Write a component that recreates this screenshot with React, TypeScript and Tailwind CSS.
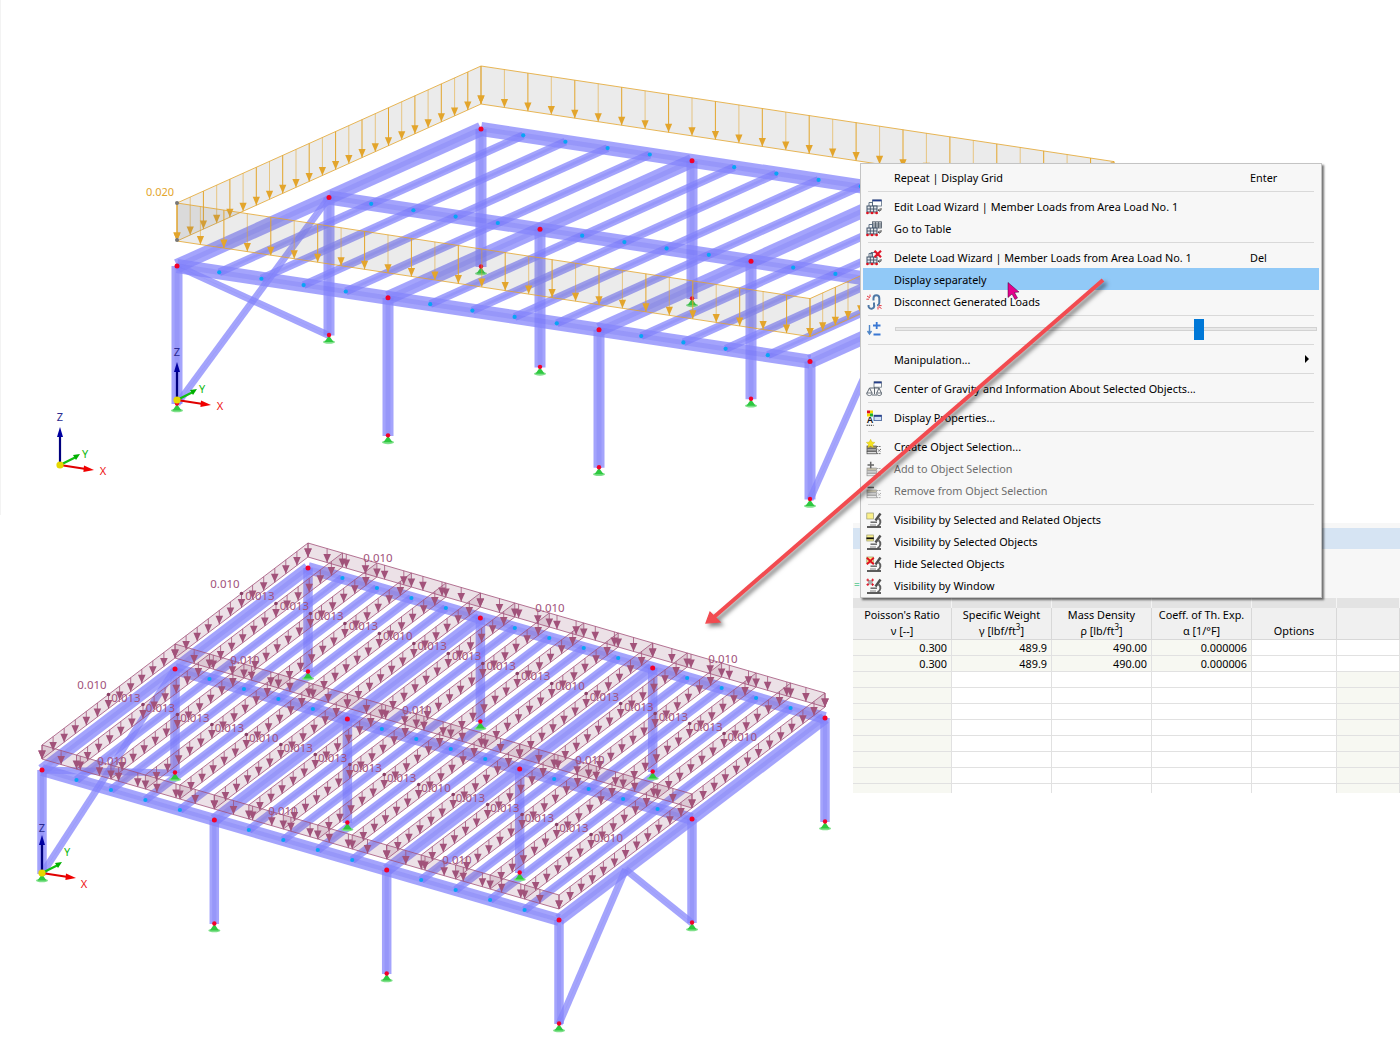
import React from "react";

type Pt = [number, number];
const BEAM = "#8484fb";
const BEAM_C = "#6a6af0";

type Proj = (i: number, j: number, h?: number) => Pt;
const top: Proj = (i, j, h = 0) => [177 + i * 42.2 + j * 152, 266 + i * 6.37 - j * 68.5 + h];
const bot: Proj = (i, j, h = 0) => [42 + i * 34.47 + j * 133, 770 + i * 10 - j * 101 + h];

const line = (a: Pt, b: Pt) => `M${a[0].toFixed(1)} ${a[1].toFixed(1)}L${b[0].toFixed(1)} ${b[1].toFixed(1)}`;
const range = (n: number) => Array.from({ length: n }, (_, k) => k);

function Member({ a, b, w, c }: { a: Pt; b: Pt; w: number; c: number }) {
  return (
    <g>
      <path d={line(a, b)} stroke={BEAM} strokeOpacity={0.74} strokeWidth={w} fill="none" />
      <path d={line(a, b)} stroke={BEAM_C} strokeOpacity={0.22} strokeWidth={c} fill="none" />
    </g>
  );
}

function Frame({ p, colH, beamW, joistW, colW }: { p: Proj; colH: number; beamW: number; joistW: number; colW: number }) {
  const grid = [0, 5, 10, 15];
  return (
    <g>
      {grid.flatMap((i) => [0, 1, 2].map((j) => <Member key={`c${i}${j}`} a={p(i, j)} b={p(i, j, colH)} w={colW} c={colW * 0.45} />))}
      {range(16).map((i) => (
        <Member key={`j${i}`} a={p(i, 0)} b={p(i, 2)} w={i % 5 === 0 ? beamW : joistW} c={i % 5 === 0 ? beamW * 0.35 : joistW * 0.35} />
      ))}
      {[0, 1, 2].map((j) => <Member key={`b${j}`} a={p(0, j)} b={p(15, j)} w={beamW} c={beamW * 0.35} />)}
      <Member a={p(0, 0, colH)} b={p(0, 1)} w={7} c={0.5} />
      <Member a={p(0, 0)} b={p(0, 1, colH)} w={7} c={0.5} />
      <Member a={p(15, 0, colH)} b={p(15, 0.5)} w={7} c={0.5} />
      <Member a={p(15, 0.5)} b={p(15, 1, colH)} w={7} c={0.5} />
      {[0, 1, 2].flatMap((j) =>
        range(16).map((i) =>
          i % 5 === 0 ? null : <circle key={`n${i}${j}`} cx={p(i, j)[0]} cy={p(i, j)[1]} r={2.1} fill="#08a4f5" />
        )
      )}
      {grid.flatMap((i) =>
        [0, 1, 2].map((j) => {
          const t = p(i, j);
          const f = p(i, j, colH);
          return (
            <g key={`s${i}${j}`}>
              <circle cx={t[0]} cy={t[1]} r={2.5} fill="#f2002a" />
              <ellipse cx={f[0]} cy={f[1] + 6.5} rx={6} ry={1.8} fill="#7fe08a" />
              <path d={`M${f[0]} ${f[1]}l-4.5 6.5h9z`} fill="#2ec840" />
              <circle cx={f[0]} cy={f[1] - 0.5} r={2.2} fill="#f2002a" />
            </g>
          );
        })
      )}
    </g>
  );
}

function Strip({ a, b, n, tH, bH, head, fill, stroke, w, lineW, fade }: { a: (h: number) => Pt; b: (h: number) => Pt; n: number; tH: number; bH: number; head: number; fill: string; stroke: string; w: number; lineW: number; fade?: boolean }) {
  const at = (k: number, h: number): Pt => {
    const s = a(h);
    const e = b(h);
    return [s[0] + ((e[0] - s[0]) * k) / n, s[1] + ((e[1] - s[1]) * k) / n];
  };
  return (
    <g>
      <path d={`${line(a(tH), b(tH))}L${b(bH).join(" ")}L${a(bH).join(" ")}Z`} fill={fill} />
      <path d={line(a(tH), b(tH))} stroke={stroke} strokeWidth={0.8} />
      <path d={line(a(bH), b(bH))} stroke={stroke} strokeWidth={0.8} />
      {range(n + 1).map((k) => {
        const s = at(k, tH);
        const e = at(k, bH);
        return (
          <g key={k}>
            <path d={line(s, e)} stroke={stroke} strokeWidth={lineW} strokeOpacity={fade && k % 2 === 1 ? 0.55 : 1} />
            <path d={`M${e[0]} ${e[1]}l${-w} ${-head}h${w * 2}z`} fill={stroke} />
          </g>
        );
      })}
    </g>
  );
}

function TopLoads() {
  const s = { tH: -63, bH: -25, head: 8.5, fill: "rgba(120,120,120,0.15)", stroke: "#e3a52c", w: 3.6, lineW: 1, fade: true };
  return (
    <g>
      <Strip a={(h) => top(0, 2, h)} b={(h) => top(15, 2, h)} n={27} {...s} />
      <Strip a={(h) => top(15, 0, h)} b={(h) => top(15, 2, h)} n={24} {...s} />
      <Strip a={(h) => top(0, 0, h)} b={(h) => top(0, 2, h)} n={23} {...s} />
      <Strip a={(h) => top(0, 0, h)} b={(h) => top(15, 0, h)} n={27} {...s} />
      <circle cx={177} cy={203} r={2} fill="#777" />
      <circle cx={177} cy={240} r={2} fill="#777" />
    </g>
  );
}

function BotLoads() {
  const s = { tH: -25, bH: -11, head: 8.5, fill: "rgba(150,90,120,0.18)", stroke: "#a2527a", w: 3.8, lineW: 0.8 };
  const rows: { x: number; y: number; t: string }[] = [];
  range(15).forEach((k) => {
    const t = k % 5 === 4 ? "0.010" : "0.013";
    rows.push({ x: 260 + 34.45 * k, y: 600 + 10.05 * k, t });
    rows.push({ x: 126 + 34.45 * k, y: 702 + 10 * k, t });
  });
  const corner: Pt[] = [[225, 588], [378, 562], [550, 612], [723, 663], [92, 689], [245, 664], [417, 714], [590, 764], [112, 765], [283, 815], [457, 864]];
  return (
    <g>
      {range(16).map((i) => <Strip key={i} a={(h) => bot(i, 0, h)} b={(h) => bot(i, 2, h)} n={24} {...s} />)}
      {[0, 1, 2].map((j) => <Strip key={j} a={(h) => bot(0, j, h)} b={(h) => bot(15, j, h)} n={27} {...s} />)}
      {range(15).flatMap((k) => [bot(k, 1.5, -25), bot(k, 0.5, -25)]).map((q, n) => <circle key={n} cx={q[0]} cy={q[1]} r={1.8} fill="#8a3f66" />)}
      <g fill="#a2527a" fontSize={11.5} textAnchor="middle" className="font-['Noto_Sans',sans-serif]">
        {rows.map((r, n) => <text key={n} x={r.x} y={r.y}>{r.t}</text>)}
        {corner.map((c, n) => <text key={n} x={c[0]} y={c[1]}>0.010</text>)}
      </g>
    </g>
  );
}

function Axes({ x, y, zL, xL, yL }: { x: number; y: number; zL: Pt; xL: Pt; yL: Pt }) {
  const xE: Pt = [x + 34, y + 5];
  const yE: Pt = [x + 20, y - 11];
  return (
    <g fontSize={11} textAnchor="middle" className="font-['Noto_Sans',sans-serif]">
      <path d={`M${x} ${y}V${y - 30}`} stroke="#00007e" strokeWidth={2.2} />
      <path d={`M${x} ${y - 38}l-3 10h6z`} fill="#0000a0" />
      <path d={`M${x} ${y}L${xE[0] - 8} ${xE[1] - 1}`} stroke="#e00000" strokeWidth={2.2} />
      <path d={`M${xE[0]} ${xE[1]}l-10 -4.5l-.6 6.5z`} fill="#f00000" />
      <path d={`M${x} ${y}L${yE[0] - 4} ${yE[1] + 3}`} stroke="#10c010" strokeWidth={2.2} />
      <path d={`M${yE[0]} ${yE[1]}l-7 1l3 5z`} fill="#00b000" />
      <circle cx={x} cy={y} r={3.6} fill="#e6d800" />
      <text x={zL[0]} y={zL[1]} fill="#2a2a90">Z</text>
      <text x={xL[0]} y={xL[1]} fill="#ee1010">X</text>
      <text x={yL[0]} y={yL[1]} fill="#10b810">Y</text>
    </g>
  );
}

function Models() {
  return (
    <svg viewBox="0 0 1400 1050" width={1400} height={1050} className="absolute left-0 top-0">
      <g>
        <Frame p={top} colH={138} beamW={14} joistW={8} colW={11} />
        <TopLoads />
        <text x={160} y={196} fontSize={11} fill="#e3a52c" textAnchor="middle" className="font-['Noto_Sans',sans-serif]">0.020</text>
        <Axes x={177} y={400} zL={[177, 356]} xL={[220, 410]} yL={[202, 393]} />
      </g>
      <Axes x={60} y={465} zL={[60, 421]} xL={[103, 475]} yL={[85, 458]} />
      <g>
        <Frame p={bot} colH={104} beamW={12} joistW={8} colW={9.5} />
        <BotLoads />
        <Axes x={42} y={873} zL={[42, 832]} xL={[84, 888]} yL={[67, 856]} />
      </g>
    </svg>
  );
}

/* ---------- menu icons ---------- */
function Ico({ children }: { children: React.ReactNode }) {
  return <svg viewBox="0 0 16 16" width={16} height={16}>{children}</svg>;
}
const Struct = () => (
  <g>
    <path d="M3 7V3.5h4M6.5 7V3.5" stroke="#50657c" strokeWidth={0.9} fill="none" />
    <rect x={1} y={7} width={10} height={6} fill="#e4e8ec" stroke="#3f5166" strokeWidth={1} />
    <path d="M4.3 7v6M7.6 7v6M1 10h10" stroke="#3f5166" strokeWidth={0.9} />
    <path d="M1 14h11" stroke="#c0392b" strokeWidth={0.6} />
    <circle cx={1.4} cy={14} r={1.3} fill="#e01020" />
    <circle cx={6} cy={14} r={1.3} fill="#e01020" />
    <circle cx={10.6} cy={14} r={1.3} fill="#e01020" />
    <path d="M15 9v2.2h-2.5M13.6 10l-1.5 1.2l1.5 1.2" stroke="#444" strokeWidth={1} fill="none" />
  </g>
);
const IEdit = () => (
  <Ico>
    <rect x={6.5} y={1} width={9} height={6} fill="#fff" stroke="#5f7184" strokeWidth={0.8} />
    <rect x={6.5} y={0.6} width={9} height={1.8} fill="#27408b" />
    <Struct />
  </Ico>
);
const ITable = () => (
  <Ico>
    <rect x={6.5} y={0.8} width={9} height={6.2} fill="#c8cdd3" stroke="#4d5865" strokeWidth={0.8} />
    <path d="M9.5 1v6M12.5 1v6M6.5 3h9M6.5 5h9" stroke="#4d5865" strokeWidth={0.8} />
    <Struct />
  </Ico>
);
const IDelete = () => (
  <Ico>
    <path d="M5 7V2.5h5" stroke="#50657c" strokeWidth={0.9} fill="none" />
    <Struct />
    <path d="M8.5 .8l6.5 6.4M15 .8L8.5 7.2" stroke="#e01528" strokeWidth={2.2} />
  </Ico>
);
const IDisconnect = () => (
  <Ico>
    <path d="M7.5 6.5V4.2a2.9 2.9 0 0 1 5.8 0V9a3 3 0 0 1-2.2 2.6" stroke="#4f78a6" strokeWidth={2} fill="none" />
    <path d="M8 8.6V11a2.7 2.7 0 0 1-5.4 1.8V11" stroke="#4f78a6" strokeWidth={2} fill="none" />
    <path d="M1 2l3 2M4 .6v2.4M.4 5.2h2.6M12.5 12.5l3 2M12 13v2.5M15.6 11.6H13" stroke="#e0202a" strokeWidth={0.9} />
  </Ico>
);
const IPlusMinus = () => (
  <Ico>
    <path d="M3.5 5v8.5M1.5 11l2 3l2-3" stroke="#4f86c8" strokeWidth={1.4} fill="none" />
    <path d="M7 5.5h7.5M10.7 2v7M7.5 14.5h7" stroke="#3a78d4" strokeWidth={1.8} />
  </Ico>
);
const IScale = () => (
  <Ico>
    <rect x={8} y={0.8} width={7.5} height={5.4} fill="#fff" stroke="#64727f" strokeWidth={0.8} />
    <rect x={8} y={0.6} width={7.5} height={1.8} fill="#27408b" />
    <path d="M8.5 6v7M6 14h5M3.5 7l-2.5 5M3.5 7l2.5 5M3.5 7H13M13 7l-2.3 5M13 7l2.4 5" stroke="#5f6872" strokeWidth={1} fill="none" />
    <path d="M.6 12a2.8 2.6 0 0 0 5.6 0zM10.6 12a2.6 2.6 0 0 0 5.2 0z" fill="#fff" stroke="#5f6872" strokeWidth={0.9} />
  </Ico>
);
const IDisplay = () => (
  <Ico>
    <rect x={1} y={0.5} width={3} height={3} fill="#e01020" />
    <rect x={4} y={0.5} width={3} height={3} fill="#f3d800" />
    <rect x={1} y={3.5} width={3} height={3} fill="#f3d800" />
    <rect x={4} y={3.5} width={3} height={3} fill="#20b030" />
    <text x={4} y={13.4} fontSize={9} fontWeight={700} fill="#111" textAnchor="middle" className="font-['Liberation_Sans',sans-serif]">A</text>
    <path d="M.6 15.3h7" stroke="#222" strokeWidth={1} strokeDasharray="1.2 .9" />
    <rect x={8} y={5.2} width={7.5} height={5.4} fill="#cfe0f5" stroke="#3d5a96" strokeWidth={0.8} />
    <rect x={8} y={5} width={7.5} height={1.8} fill="#27408b" />
  </Ico>
);
const Stack = ({ gray }: { gray?: boolean }) => (
  <g opacity={gray ? 0.55 : 1}>
    <rect x={1} y={7} width={9.5} height={2.2} fill="#a89c70" stroke="#444" strokeWidth={0.7} />
    <rect x={1} y={9.8} width={9.5} height={2.2} fill="#bbb" stroke="#444" strokeWidth={0.7} />
    <rect x={1} y={12.6} width={9.5} height={2.2} fill="#ddd" stroke="#444" strokeWidth={0.7} />
    <path d="M11 7.5h4M11.5 10l3.5 3M15 10l-3.5 3M11 14.6h4" stroke="#666" strokeWidth={1} strokeDasharray="1.4 .7" />
  </g>
);
const ICreate = () => (
  <Ico>
    <Stack />
    <path d="M4.6.3l1.3 2.7l3 .4l-2.2 2l.6 3l-2.7-1.5l-2.7 1.5l.6-3l-2.2-2l3-.4z" fill="#f5e320" stroke="#c9b20a" strokeWidth={0.4} />
  </Ico>
);
const IAdd = () => (
  <Ico>
    <Stack gray />
    <path d="M1.5 4h6.5M4.7 .8v6.5" stroke="#666" strokeWidth={1.5} />
  </Ico>
);
const IRemove = () => (
  <Ico>
    <Stack gray />
    <path d="M1.5 4.5h6.5" stroke="#666" strokeWidth={1.6} />
  </Ico>
);
const Scope = () => (
  <g>
    <path d="M14.5 1.5L9.5 8.5" stroke="#4f4f4f" strokeWidth={2.4} />
    <path d="M12.5 6.2a4.6 4.6 0 0 1-1 8" stroke="#5f5f5f" strokeWidth={1.9} fill="none" />
    <path d="M4.5 10.2h6.5" stroke="#6a6a6a" strokeWidth={1.5} />
    <path d="M1 15h14" stroke="#4a4a4a" strokeWidth={1.8} />
    <path d="M4 13h6" stroke="#999" strokeWidth={1.2} />
  </g>
);
const Y = () => <rect x={0.8} y={1} width={6.6} height={6} fill="#fbf08a" stroke="#9a9a70" strokeWidth={0.7} />;
const ISelRel = () => <Ico><Y /><Scope /></Ico>;
const ISel = () => <Ico><Y /><path d="M.4 4.3h7.4" stroke="#111" strokeWidth={1.8} /><Scope /></Ico>;
const IHide = () => <Ico><Y /><Scope /><path d="M.8 1.8l7 6.4M7.8 1.8l-7 6.4" stroke="#e01020" strokeWidth={1.9} /></Ico>;
const IWin = () => (
  <Ico>
    <rect x={2} y={2} width={4.6} height={4.6} fill="#aaa" />
    <path d="M.4 2h2.6M1.8.6v2.8M5.4 2h2.6M6.6.6v2.8M.4 6.6h2.6M1.8 5.2V8M5.4 6.6h2.6M6.6 5.2V8" stroke="#e01020" strokeWidth={0.9} />
    <Scope />
  </Ico>
);

function Row({ icon, label, short, on, off, sub }: { icon?: React.ReactNode; label: string; short?: string; on?: boolean; off?: boolean; sub?: boolean }) {
  return (
    <div className={`flex h-[22px] items-center ${on ? "mb-px mt-[-1px] bg-[#91c9f7] pt-[2px]" : ""} ${off ? "text-[#6e6e6e]" : "text-black"}`}>
      <div className="flex w-[31px] shrink-0 pl-[3px]">{icon}</div>
      <div className="flex-1 whitespace-nowrap">{label}</div>
      {short ? <div className="w-[69px] shrink-0">{short}</div> : null}
      {sub ? <div className="mr-[10px] mt-[-3px] h-0 w-0 border-y-[4px] border-l-[4px] border-y-transparent border-l-black" /> : null}
    </div>
  );
}
const Sep = () => (
  <div className="h-[7px] px-[5px] pt-[2px]">
    <div className="h-px bg-[#d9d9d9]" />
  </div>
);

function Menu() {
  return (
    <div className="absolute left-[860px] top-[163px] h-[435px] w-[462px] border border-[#c4c4c4] bg-[#f7f7f7] px-[2px] pt-[3px] text-[10.85px] leading-none shadow-[2px_2px_2px_rgba(0,0,0,0.55)]">
      <Row label="Repeat | Display Grid" short="Enter" />
      <Sep />
      <Row icon={<IEdit />} label="Edit Load Wizard | Member Loads from Area Load No. 1" />
      <Row icon={<ITable />} label="Go to Table" />
      <Sep />
      <Row icon={<IDelete />} label="Delete Load Wizard | Member Loads from Area Load No. 1" short="Del" />
      <Row label="Display separately" on />
      <Row icon={<IDisconnect />} label="Disconnect Generated Loads" />
      <Sep />
      <div className="flex h-[22px] items-start">
        <div className="flex w-[31px] shrink-0 pl-[3px]"><IPlusMinus /></div>
        <div className="relative ml-[1px] mr-[2px] mt-[7px] h-[4px] flex-1 border border-[#d2d2d2] bg-[#e8e8e8]">
          <div className="absolute left-[298px] top-[-9px] h-[21px] w-[10px] bg-[#0078d7]" />
        </div>
      </div>
      <Sep />
      <Row label="Manipulation..." sub />
      <Sep />
      <Row icon={<IScale />} label="Center of Gravity and Information About Selected Objects..." />
      <Sep />
      <Row icon={<IDisplay />} label="Display Properties..." />
      <Sep />
      <Row icon={<ICreate />} label="Create Object Selection..." />
      <Row icon={<IAdd />} label="Add to Object Selection" off />
      <Row icon={<IRemove />} label="Remove from Object Selection" off />
      <Sep />
      <Row icon={<ISelRel />} label="Visibility by Selected and Related Objects" />
      <Row icon={<ISel />} label="Visibility by Selected Objects" />
      <Row icon={<IHide />} label="Hide Selected Objects" />
      <Row icon={<IWin />} label="Visibility by Window" />
    </div>
  );
}

/* ---------- table ---------- */
const COLS = "grid grid-cols-[99px_100px_100px_100px_85px_63px]";
const HEAD: [string, React.ReactNode][] = [
  ["Poisson's Ratio", "ν [--]"],
  ["Specific Weight", <>γ [lbf/ft<sup className="text-[8px]">3</sup>]</>],
  ["Mass Density", <>ρ [lb/ft<sup className="text-[8px]">3</sup>]</>],
  ["Coeff. of Th. Exp.", "α [1/°F]"],
  ["", "Options"],
  ["", ""],
];
const TINT = "bg-[#f7f8f2]";

function Table() {
  const data = [["0.300", "489.9", "490.00", "0.000006"], ["0.300", "489.9", "490.00", "0.000006"]];
  return (
    <div className="absolute left-[853px] top-[523px] h-[270px] w-[547px] overflow-hidden bg-white text-[10.85px] leading-none text-black">
      <div className="h-[5px] bg-[#f7f7f7]" />
      <div className="h-[21px] bg-[#d6e4f3]" />
      <div className="flex h-[49px] items-end bg-[#f7f7f7] pb-[9px] pl-[1px] text-[10px] text-[#6fcfa0]">=</div>
      <div className={`${COLS} h-[10px] bg-[#e3e3e3]`}>
        {range(6).map((k) => <div key={k} className="border-r border-[#f4f4f4]" />)}
      </div>
      <div className={`${COLS} h-[32px] bg-[#f0f0f0]`}>
        {HEAD.map(([a, b], k) => (
          <div key={k} className="flex flex-col items-center border-b border-r border-[#d8d8d8]">
            <div className="flex h-[15px] items-center">{a}</div>
            <div className="flex h-[16px] items-center whitespace-nowrap">{b}</div>
          </div>
        ))}
      </div>
      {range(10).map((r) => (
        <div key={r} className={`${COLS} h-[16px]`}>
          {range(6).map((c) => {
            const tinted = r < 2 ? c < 4 : c === 0 || c === 5;
            return (
              <div key={c} className={`flex items-center justify-end border-b border-r border-[#e1e1e1] pr-[4px] pt-[2px] ${tinted ? TINT : ""}`}>
                {r < 2 && c < 4 ? data[r][c] : ""}
              </div>
            );
          })}
        </div>
      ))}
    </div>
  );
}

function Overlay() {
  return (
    <svg viewBox="0 0 1400 1050" width={1400} height={1050} className="pointer-events-none absolute left-0 top-0">
      <g className="drop-shadow-[3px_3px_2px_rgba(0,0,0,0.5)]">
        <path d="M1103 280L714 617" stroke="#f24b50" strokeWidth={4} fill="none" />
        <path d="M706 623L710 612L720 622Z" fill="#f24b50" stroke="#f24b50" strokeWidth={1.2} />
      </g>
      <path d="M1008 282.5V297.5L1012 294L1015 299.5L1017.5 298L1014.5 292.5L1019 292Z" fill="#e6008c" stroke="#3a0030" strokeWidth={0.5} />
    </svg>
  );
}

export default function App() {
  return (
    <div className="relative h-[1050px] w-[1400px] overflow-hidden bg-white font-['Noto_Sans',sans-serif]">
      <div className="absolute left-0 top-0 h-[515px] w-px bg-[#f3f3f3]" />
      <Models />
      <Table />
      <Menu />
      <Overlay />
    </div>
  );
}
